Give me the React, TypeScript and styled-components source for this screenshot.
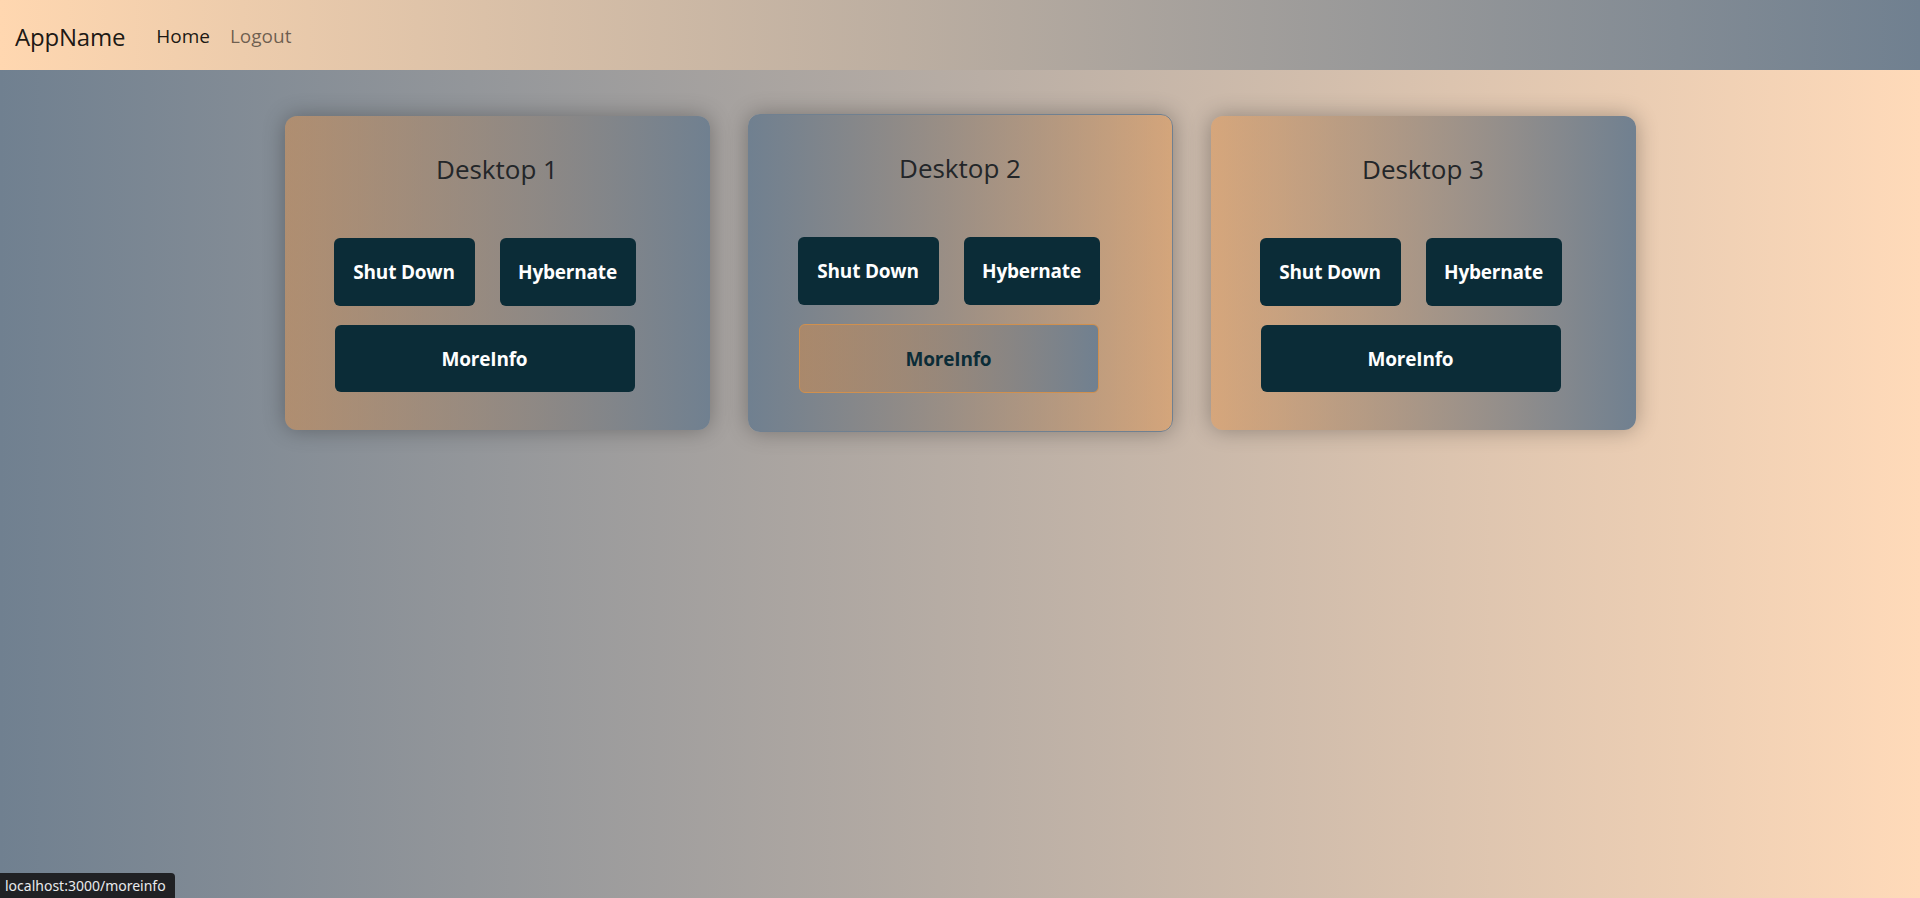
import React from "react";
import styled, { createGlobalStyle } from "styled-components";

const GlobalStyle = createGlobalStyle`
  html, body {
    margin: 0;
    padding: 0;
  }
  body {
    min-height: 898px;
    font-family: "Open Sans", "Noto Sans", sans-serif;
    color: #212529;
    background: linear-gradient(to right, #708090, #ffdab9);
    background-attachment: fixed;
  }
`;

const Page = styled.div`
  min-height: 898px;
  display: flex;
  flex-direction: column;
`;

const NavBar = styled.nav`
  height: 70px;
  display: flex;
  align-items: center;
  padding: 2px 15px 0;
  box-sizing: border-box;
  background: linear-gradient(to right, #ffd7b0, #708090);
`;

const Brand = styled.a`
  font-size: 24px;
  color: rgba(0, 0, 0, 0.9);
  text-decoration: none;
  margin-right: 21px;
  letter-spacing: -0.2px;
`;

const NavLink = styled.a<{ $active?: boolean }>`
  font-size: 19px;
  padding: 0 10px;
  text-decoration: none;
  color: ${(p) => (p.$active ? "rgba(0,0,0,0.9)" : "rgba(0,0,0,0.55)")};
`;

const CardRow = styled.main`
  display: flex;
  justify-content: center;
  align-items: center;
  gap: 38px;
  padding-top: 44px;
`;

const Card = styled.section<{ $hover?: boolean }>`
  width: 425px;
  box-sizing: border-box;
  border-radius: 12px;
  padding: 37px 0 38px 49px;
  border: ${(p) => (p.$hover ? "1px solid #708090" : "none")};
  background: ${(p) =>
    p.$hover
      ? "linear-gradient(to right, #708090, rgba(227, 143, 67, 0.45))"
      : "linear-gradient(to right, rgba(227, 143, 67, 0.45), #708090)"};
  box-shadow: 0 0 22px rgba(0, 0, 0, 0.3);
`;

const Title = styled.h3`
  margin: 0 0 53px -49px;
  height: 32px;
  line-height: 32px;
  text-align: center;
  font-size: 26px;
  font-weight: 400;
  color: #232629;
`;

const Buttons = styled.div`
  display: flex;
  flex-direction: column;
  align-items: flex-start;
  gap: 19px;
`;

const ButtonLine = styled.div`
  display: flex;
  gap: 25px;
`;

const Button = styled.button<{ $w: number; $hover?: boolean }>`
  width: ${(p) => p.$w}px;
  height: ${(p) => (p.$hover ? 69 : 68)}px;
  border-radius: 6px;
  font-family: "Open Sans", "Noto Sans", sans-serif;
  font-weight: 700;
  font-size: 19px;
  letter-spacing: -0.2px;
  cursor: pointer;
  padding: 0;
  border: ${(p) => (p.$hover ? "1px solid #d0904e" : "none")};
  color: ${(p) => (p.$hover ? "#0b2c37" : "#ffffff")};
  background: ${(p) =>
    p.$hover
      ? "linear-gradient(to right, rgba(227, 143, 67, 0.45), #708090)"
      : "#0b2c37"};
`;

const WideButton = styled(Button)`
  margin-left: 1px;
  height: ${(p) => (p.$hover ? 69 : 67)}px;
`;

const StatusTip = styled.div`
  position: fixed;
  left: 0;
  bottom: 0;
  height: 25px;
  padding: 0 9px 0 5px;
  display: flex;
  align-items: center;
  background: #202124;
  color: #e8eaed;
  font-family: "Noto Sans", "Open Sans", sans-serif;
  font-size: 14px;
  border-top-right-radius: 4px;
`;

const desktops = [
  { name: "Desktop 1", hover: false },
  { name: "Desktop 2", hover: true },
  { name: "Desktop 3", hover: false },
];

const App = () => {
  return (
    <Page>
      <GlobalStyle />
      <NavBar>
        <Brand href="#">AppName</Brand>
        <NavLink $active href="#">Home</NavLink>
        <NavLink href="#">Logout</NavLink>
      </NavBar>
      <CardRow>
        {desktops.map((d) => (
          <Card key={d.name} $hover={d.hover}>
            <Title>{d.name}</Title>
            <Buttons>
              <ButtonLine>
                <Button $w={141}>Shut Down</Button>
                <Button $w={136}>Hybernate</Button>
              </ButtonLine>
              <WideButton $w={300} $hover={d.hover}>MoreInfo</WideButton>
            </Buttons>
          </Card>
        ))}
      </CardRow>
      <StatusTip>localhost:3000/moreinfo</StatusTip>
    </Page>
  );
};

export default App;
